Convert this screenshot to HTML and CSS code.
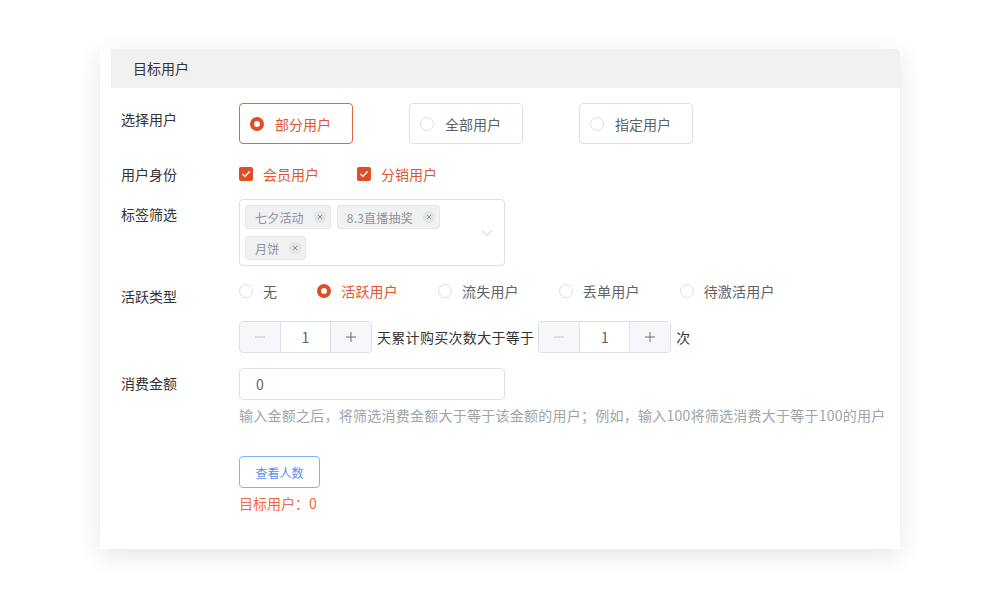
FILE: index.html
```html
<!DOCTYPE html>
<html lang="zh-CN">
<head>
<meta charset="utf-8">
<title>目标用户</title>
<link rel="stylesheet" href="styles.css">
</head>
<body>
<div class="page">
  <div class="card">
    <div class="card-head">目标用户</div>
    <div class="form">
      <div class="row">
        <div class="label lp-6">选择用户</div>
        <div class="content rcards">
          <div class="rcard on"><span class="radio on"></span>部分用户</div>
          <div class="rcard"><span class="radio"></span>全部用户</div>
          <div class="rcard"><span class="radio"></span>指定用户</div>
        </div>
      </div>

      <div class="row mt-20">
        <div class="label">用户身份</div>
        <div class="content checks">
          <label class="check"><span class="cbox"><svg width="14" height="14" viewBox="0 0 14 14"><path d="M3.8 7.2 L6.1 9.4 L10.3 4.8" fill="none" stroke="#fff" stroke-width="1.4" stroke-linecap="round" stroke-linejoin="round"/></svg></span>会员用户</label>
          <label class="check"><span class="cbox"><svg width="14" height="14" viewBox="0 0 14 14"><path d="M3.8 7.2 L6.1 9.4 L10.3 4.8" fill="none" stroke="#fff" stroke-width="1.4" stroke-linecap="round" stroke-linejoin="round"/></svg></span>分销用户</label>
        </div>
      </div>

      <div class="row mt-15">
        <div class="label lp-5">标签筛选</div>
        <div class="content">
          <div class="select">
            <div class="tags">
              <span class="tag">七夕活动<span class="tag-x"><svg width="12" height="12" viewBox="0 0 12 12"><circle cx="6" cy="6" r="6" fill="#e2e3e7"/><path d="M4 4 L8 8 M8 4 L4 8" stroke="#909399" stroke-width="1"/></svg></span></span>
              <span class="tag">8.3直播抽奖<span class="tag-x"><svg width="12" height="12" viewBox="0 0 12 12"><circle cx="6" cy="6" r="6" fill="#e2e3e7"/><path d="M4 4 L8 8 M8 4 L4 8" stroke="#909399" stroke-width="1"/></svg></span></span>
              <span class="tag">月饼<span class="tag-x"><svg width="12" height="12" viewBox="0 0 12 12"><circle cx="6" cy="6" r="6" fill="#e2e3e7"/><path d="M4 4 L8 8 M8 4 L4 8" stroke="#909399" stroke-width="1"/></svg></span></span>
            </div>
            <svg class="arrow" width="12" height="8" viewBox="0 0 12 8"><path d="M1 1.5 L6 6.5 L11 1.5" fill="none" stroke="#c0c4cc" stroke-width="1"/></svg>
          </div>
        </div>
      </div>

      <div class="row mt-15">
        <div class="label lp-5">活跃类型</div>
        <div class="content">
          <div class="radios">
            <label class="ritem"><span class="radio"></span>无</label>
            <label class="ritem on"><span class="radio on"></span>活跃用户</label>
            <label class="ritem"><span class="radio"></span>流失用户</label>
            <label class="ritem"><span class="radio"></span>丢单用户</label>
            <label class="ritem"><span class="radio"></span>待激活用户</label>
          </div>
          <div class="nums">
            <div class="num">
              <span class="num-btn minus"><svg width="12" height="12" viewBox="0 0 12 12"><path d="M1 6 H11" stroke="#c4c7cf" stroke-width="1"/></svg></span>
              <span class="num-val">1</span>
              <span class="num-btn plus"><svg width="12" height="12" viewBox="0 0 12 12"><path d="M1 6 H11 M6 1 V11" stroke="#6b6e75" stroke-width="1"/></svg></span>
            </div>
            <span class="num-text">天累计购买次数大于等于</span>
            <div class="num">
              <span class="num-btn minus"><svg width="12" height="12" viewBox="0 0 12 12"><path d="M1 6 H11" stroke="#c4c7cf" stroke-width="1"/></svg></span>
              <span class="num-val">1</span>
              <span class="num-btn plus"><svg width="12" height="12" viewBox="0 0 12 12"><path d="M1 6 H11 M6 1 V11" stroke="#6b6e75" stroke-width="1"/></svg></span>
            </div>
            <span class="num-text">次</span>
          </div>
        </div>
      </div>

      <div class="row mt-15">
        <div class="label lp-5">消费金额</div>
        <div class="content">
          <div class="input">0</div>
          <div class="hint">输入金额之后，将筛选消费金额大于等于该金额的用户；例如，输入100将筛选消费大于等于100的用户</div>
          <button class="btn">查看人数</button>
          <div class="result">目标用户：0</div>
        </div>
      </div>
    </div>
  </div>
</div>
</body>
</html>
```

FILE: styles.css
```css
* { box-sizing: border-box; }

html, body {
  min-height: 100%;
}

body {
  margin: 0;
  background: #fff;
  font-family: "Noto Sans CJK SC", "Noto Sans", sans-serif;
  color: #333;
}

.page {
  padding: 49px 100px 50px;
}

.card {
  width: 800px;
  background: #fff;
  box-shadow: 0 6px 22px rgba(0, 0, 0, 0.1);
  padding-bottom: 36px;
}

.card-head {
  margin-left: 11px;
  height: 39px;
  line-height: 38px;
  padding-left: 22px;
  background: #f2f0f1;
  border-top-right-radius: 4px;
  font-size: 14px;
  color: #333;
}

.form {
  padding: 15px 0 0 21px;
}

.row {
  display: flex;
}

.mt-20 { margin-top: 20px; }
.mt-15 { margin-top: 15px; }

.label {
  width: 118px;
  flex: none;
  font-size: 14px;
  line-height: 20px;
  color: #333;
}

.lp-6 { padding-top: 6px; }
.lp-5 { padding-top: 5px; }

.content {
  flex: 1;
  min-width: 0;
}

/* radio cards */
.rcards {
  display: flex;
}

.rcard {
  display: flex;
  align-items: center;
  width: 114px;
  height: 41px;
  border: 1px solid #dcdfe6;
  border-radius: 4px;
  padding-left: 10px;
  font-size: 14px;
  color: #606266;
}

.rcard + .rcard {
  margin-left: 56px;
}

.rcard.on {
  border-color: #e4653f;
  color: #e0552f;
}

.radio {
  flex: none;
  width: 14px;
  height: 14px;
  border: 1px solid #dcdfe6;
  border-radius: 50%;
  background: #fff;
  margin-right: 11px;
}

.radio.on {
  border: 4px solid #df4d25;
}

/* checkboxes */
.checks {
  display: flex;
}

.check {
  display: flex;
  align-items: center;
  font-size: 14px;
  line-height: 20px;
  color: #e0552f;
}

.check + .check {
  margin-left: 38px;
}

.cbox {
  width: 14px;
  height: 14px;
  border-radius: 2px;
  background: #df4d25;
  margin-right: 10px;
  display: flex;
}

/* select */
.select {
  display: flex;
  align-items: center;
  width: 266px;
  height: 67px;
  border: 1px solid #dcdfe6;
  border-radius: 4px;
  padding: 5px 11px 5px 5px;
}

.tags {
  flex: 1;
  display: flex;
  flex-wrap: wrap;
  gap: 7px 6px;
  align-self: flex-start;
}

.tag {
  display: flex;
  align-items: center;
  height: 24px;
  padding: 0 4px 0 9px;
  background: #f0f1f3;
  border: 1px solid #e6e7ea;
  border-radius: 3px;
  font-size: 12px;
  letter-spacing: 0.2px;
  color: #909399;
}

.tag-x {
  display: flex;
  margin-left: 10px;
}

.arrow {
  flex: none;
}

/* activity radios */
.radios {
  display: flex;
}

.ritem {
  display: flex;
  align-items: center;
  font-size: 14px;
  line-height: 20px;
  letter-spacing: 0.2px;
  color: #606266;
  margin-right: 40px;
}

.ritem .radio {
  margin-right: 10px;
}

.ritem.on {
  color: #e0552f;
}

/* number inputs */
.nums {
  display: flex;
  align-items: center;
  margin-top: 20px;
}

.num {
  display: flex;
  width: 133px;
  height: 32px;
  border: 1px solid #dcdfe6;
  border-radius: 4px;
  overflow: hidden;
}

.num-btn {
  width: 41px;
  display: flex;
  align-items: center;
  justify-content: center;
  background: #f5f7fa;
}

.num-btn.minus { border-right: 1px solid #dcdfe6; }
.num-btn.plus { border-left: 1px solid #dcdfe6; }

.num-val {
  flex: 1;
  text-align: center;
  line-height: 30px;
  font-size: 14px;
  color: #606266;
}

.num-text {
  font-size: 14px;
  letter-spacing: 0.3px;
  color: #333;
  margin: 0 4px 0 5px;
}

/* amount */
.input {
  width: 266px;
  height: 32px;
  border: 1px solid #dcdfe6;
  border-radius: 4px;
  padding-left: 16px;
  line-height: 30px;
  font-size: 14px;
  color: #606266;
}

.hint {
  margin-top: 5px;
  font-size: 14px;
  line-height: 20px;
  letter-spacing: 0.25px;
  color: #a0a3aa;
  white-space: nowrap;
}

.btn {
  display: block;
  margin-top: 31px;
  width: 81px;
  height: 32px;
  border: 1px solid #7db3fb;
  border-radius: 4px;
  background: #fff;
  font-family: inherit;
  font-size: 12px;
  color: #5b8def;
  padding: 0;
}

.result {
  margin-top: 5px;
  font-size: 14px;
  line-height: 20px;
  color: #f06842;
}
```
